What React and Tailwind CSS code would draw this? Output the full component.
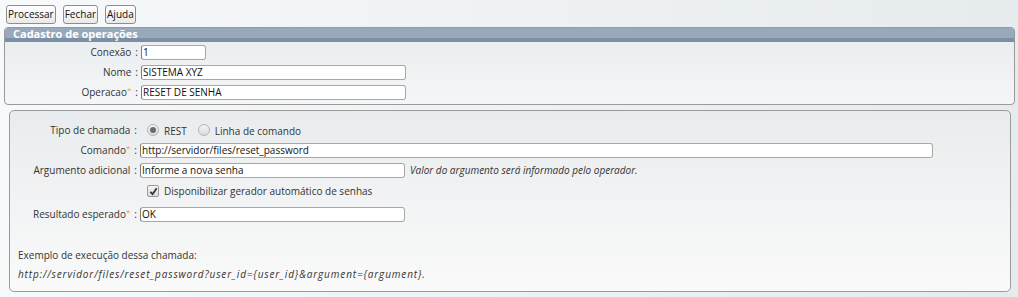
const font = { fontFamily: '"Open Sans", "DejaVu Sans", sans-serif' };

const Field = ({ label, required, children, labelWidth = 'w-[136px]' }) => (
  <div className="flex items-center h-5">
    <div className={`${labelWidth} shrink-0 text-right pr-[3px] text-[#333]`}>
      {label}
      {required && <span className="text-[#e8a33a] text-[8px] align-top relative -top-px">*</span>}
      <span className="ml-1">:</span>
    </div>
    {children}
  </div>
);

const Input = ({ value, className = 'w-[265px]' }) => (
  <div
    className={`h-[15px] leading-[13px] px-px border border-[#a7a7a7] border-l-[#7c7c7c] rounded-[3px] bg-white text-[#111] whitespace-nowrap overflow-hidden ${className}`}
  >
    {value}
  </div>
);

const Radio = ({ checked }) => (
  <span className="w-[12px] h-[12px] rounded-full border border-[#b5b5b5] bg-gradient-to-b from-[#f4f4f4] to-[#dcdcdc] flex items-center justify-center">
    {checked && <span className="w-[6px] h-[6px] rounded-full bg-[#6b6b6b]" />}
  </span>
);

export default function App() {
  return (
    <div
      className="w-[1018px] h-[297px] bg-gradient-to-r from-[#f7f9fa] to-[#e6ebee] text-[10px] text-[#333] overflow-hidden"
      style={font}
    >
      <div className="flex gap-[7px] px-[6px] pt-[5px] h-[27px]">
        {['Processar', 'Fechar', 'Ajuda'].map((b) => (
          <button
            key={b}
            className="h-[19px] px-[1px] border border-[#8e8e8e] rounded-[3px] bg-gradient-to-b from-white to-[#e9e9e9] text-[#111] leading-[17px]"
          >
            {b}
          </button>
        ))}
      </div>

      <div className="ml-[4px] mr-[3px] border border-[#9a9a9a] rounded-[4px] overflow-hidden bg-gradient-to-b from-[#e9ecee] to-[#f4f6f7]">
        <div className="h-[14px] bg-[#98a9bb] border-b-[4px] border-[#7b90a6] text-white font-bold leading-[12px] pl-[8px] text-[11px]">
          Cadastro de operações
        </div>
        <div className="pb-[2px]">
          <Field label="Conexão">
            <Input value="1" className="w-[65px]" />
          </Field>
          <Field label="Nome">
            <Input value="SISTEMA XYZ" />
          </Field>
          <Field label="Operacao" required>
            <Input value="RESET DE SENHA" />
          </Field>
        </div>
      </div>

      <div className="mt-[5px] ml-[9px] mr-[7px] h-[182px] border border-[#9a9a9a] rounded-[5px] bg-gradient-to-b from-[#e9ecee] to-[#fafafa] pt-[9px]">
        <Field label="Tipo de chamada" labelWidth="w-[130px]">
          <div className="flex items-center ml-[7px] gap-[5px]">
            <Radio checked />
            <span className="mt-[3px]">REST</span>
            <span className="ml-[6px]"><Radio /></span>
            <span className="mt-[3px]">Linha de comando</span>
          </div>
        </Field>
        <Field label="Comando" required labelWidth="w-[130px]">
          <Input value="http://servidor/files/reset_password" className="w-[793px]" />
        </Field>
        <Field label="Argumento adicional" labelWidth="w-[130px]">
          <Input value="Informe a nova senha" />
          <span className="italic ml-[5px]">Valor do argumento será informado pelo operador.</span>
        </Field>
        <div className="flex items-center h-[22px] pl-[137px]">
          <span className="w-[12px] h-[12px] rounded-[2px] border border-[#9a9a9a] bg-gradient-to-b from-[#f4f4f4] to-[#dcdcdc] flex items-center justify-center">
            <svg width="9" height="9" viewBox="0 0 10 10">
              <path d="M1.5 5.5 L4 8 L8.5 1.5" fill="none" stroke="#333" strokeWidth="2" />
            </svg>
          </span>
          <span className="ml-[5px]">Disponibilizar gerador automático de senhas</span>
        </div>
        <div className="mt-[2px]">
          <Field label="Resultado esperado" required labelWidth="w-[130px]">
            <Input value="OK" />
          </Field>
        </div>
        <div className="mt-[22px] pl-[8px] leading-[19px]">
          <div>Exemplo de execução dessa chamada:</div>
          <div className="italic tracking-[0.85px]">
            http://servidor/files/reset_password?user_id={'{user_id}'}&amp;argument={'{argument}'}.
          </div>
        </div>
      </div>
    </div>
  );
}
